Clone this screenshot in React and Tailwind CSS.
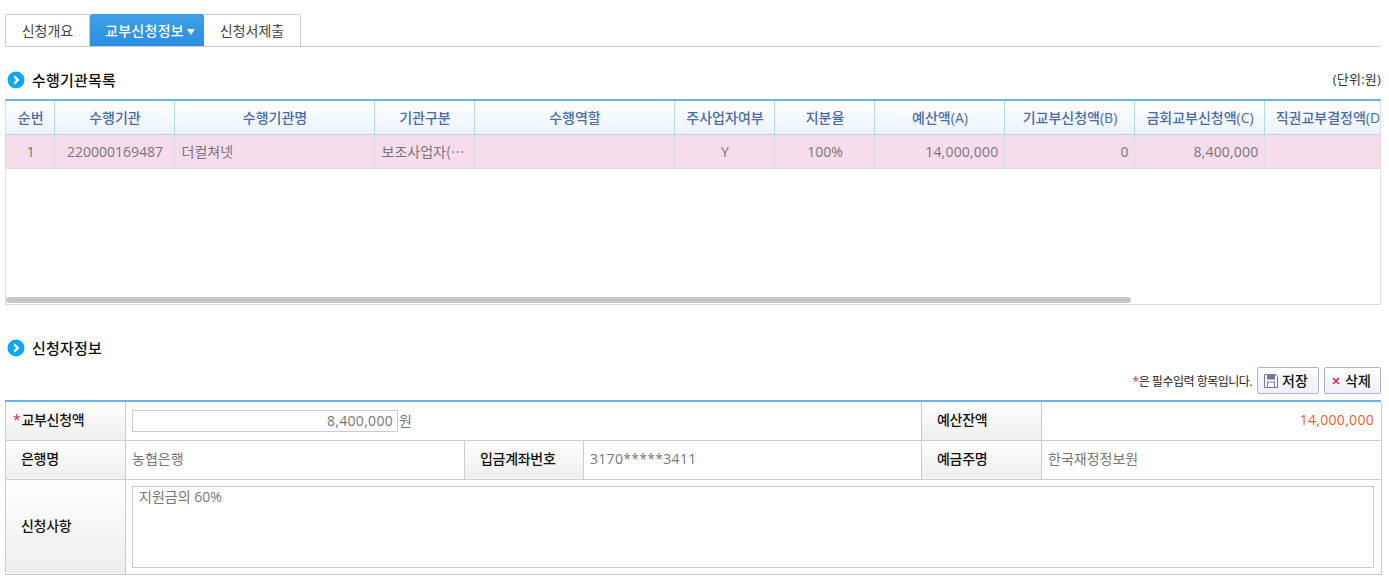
import React from 'react';

const columns = [
  { label: '순번', width: 'w-[48px]' },
  { label: '수행기관', width: 'w-[120px]' },
  { label: '수행기관명', width: 'w-[200px]' },
  { label: '기관구분', width: 'w-[100px]' },
  { label: '수행역할', width: 'w-[200px]' },
  { label: '주사업자여부', width: 'w-[100px]' },
  { label: '지분율', width: 'w-[100px]' },
  { label: '예산액(A)', width: 'w-[130px]' },
  { label: '기교부신청액(B)', width: 'w-[130px]' },
  { label: '금회교부신청액(C)', width: 'w-[130px]' },
  { label: '직권교부결정액(D)', width: 'w-[130px]' },
];

const row = [
  { text: '1', align: 'text-center' },
  { text: '220000169487', align: 'text-center' },
  { text: '더컬쳐넷', align: 'text-left' },
  { text: '보조사업자(주관)', align: "text-left font-['Noto_Sans_CJK_KR',sans-serif]" },
  { text: '', align: 'text-left' },
  { text: 'Y', align: 'text-center' },
  { text: '100%', align: 'text-center' },
  { text: '14,000,000', align: 'text-right tracking-[0.2px]' },
  { text: '0', align: 'text-right' },
  { text: '8,400,000', align: 'text-right tracking-[0.2px]' },
  { text: '', align: 'text-right' },
];

function SectionTitle({ children }) {
  return (
    <div className="flex items-center gap-[7px] text-[15px] font-medium text-[#111] tracking-[0.2px]">
      <svg width="18" height="18" viewBox="0 0 18 18">
        <circle cx="9" cy="9" r="8.5" fill="#0ea8f0" />
        <path d="M7.2 5.4 10.8 9l-3.6 3.6" fill="none" stroke="#fff" strokeWidth="2.2" />
      </svg>
      {children}
    </div>
  );
}

function Th({ children, className = '', ...rest }) {
  return (
    <th
      {...rest}
      className={`border border-[#ccc] bg-gradient-to-b from-white to-[#eee] font-medium text-[#111] text-left px-[15px] pb-[2px] tracking-[-0.3px] ${className}`}
    >
      {children}
    </th>
  );
}

function Td({ children, className = '', ...rest }) {
  return (
    <td {...rest} className={`border border-[#ccc] px-[6px] pb-[2px] text-[#777] ${className}`}>
      {children}
    </td>
  );
}

export default function App() {
  return (
    <div className="w-[1389px] h-[583px] overflow-hidden bg-white pl-[5px] pr-2 pt-[14px] text-[14px]">
      <div className="font-['Open_Sans','Noto_Sans_CJK_KR',sans-serif]">
        {/* tabs */}
        <div className="flex h-[33px] border-b border-[#ccc] text-[#444]">
          <div className="w-[85px] h-[32px] flex items-center justify-center border border-b-0 border-[#ccc] rounded-t-[2px]">
            신청개요
          </div>
          <div className="w-[114px] h-[32px] pl-[6px] flex items-center justify-center gap-[3px] bg-gradient-to-b from-[#3f9fe6] to-[#2b8fe0] text-white font-medium tracking-[0.3px] rounded-t-[2px]">
            교부신청정보
            <svg width="8" height="6" viewBox="0 0 8 6" className="mt-[3px]">
              <path d="M0 0h8L4 6z" fill="#fff" />
            </svg>
          </div>
          <div className="w-[97px] h-[32px] flex items-center justify-center border border-b-0 border-l-0 border-[#ccc] rounded-t-[2px]">
            신청서제출
          </div>
        </div>

        <div className="flex items-center justify-between h-[18px] mt-[24px] pl-[2px]">
          <SectionTitle>수행기관목록</SectionTitle>
          <span className="text-[13px] tracking-[0.2px] text-[#333]">(단위:원)</span>
        </div>

        {/* grid */}
        <div className="relative mt-[10px] h-[206px] border border-t-2 border-[#ddd] border-t-[#6fb1ee] overflow-hidden">
          <table className="table-fixed w-[1388px] border-collapse">
            <thead>
              <tr className="h-[33px]">
                {columns.map((c) => (
                  <th
                    key={c.label}
                    className={`${c.width} pl-[2px] border-r border-b border-[#b5d6f7] bg-gradient-to-b from-white to-[#eaf4fd] font-medium text-[#4a6aa8] whitespace-nowrap overflow-hidden`}
                  >
                    {c.label}
                  </th>
                ))}
              </tr>
            </thead>
            <tbody>
              <tr className="h-[34px] bg-[#f7dcec] text-[#777]">
                {row.map((cell, i) => (
                  <td
                    key={i}
                    className={`${cell.align} border-r border-b border-[#dcdce4] pl-[7px] pr-[5px] whitespace-nowrap overflow-hidden text-ellipsis`}
                  >
                    {cell.text}
                  </td>
                ))}
              </tr>
            </tbody>
          </table>
          <div className="absolute left-0 bottom-[1px] w-[1125px] h-[6px] rounded-full bg-[#c8c8c8]" />
        </div>

        <div className="h-[18px] mt-[32px] pl-[2px]">
          <SectionTitle>신청자정보</SectionTitle>
        </div>

        <div className="flex items-center justify-end gap-[5px] h-[27px] mt-[12px]">
          <span className="text-[12px] tracking-[-0.5px] text-[#222] mt-[3px]">
            <span className="text-[#e0245e]">*</span>은 필수입력 항목입니다.
          </span>
          <button className="flex items-center justify-center gap-[4px] w-[62px] h-[27px] pr-[4px] border border-[#a9b4d2] rounded-[2px] bg-gradient-to-b from-white to-[#edf0f6] text-[#111] font-medium">
            <svg width="14" height="14" viewBox="0 0 14 14">
              <path d="M.5.5h11l2 2v11H.5z" fill="#fff" stroke="#6f78a8" />
              <rect x="3" y="1" width="8" height="4.5" fill="#6f78a8" />
              <rect x="3.5" y="8" width="7" height="5.5" fill="#fff" stroke="#6f78a8" />
            </svg>
            저장
          </button>
          <button className="flex items-center justify-center gap-[5px] w-[57px] h-[27px] pr-[2px] border border-[#a9b4d2] rounded-[2px] bg-gradient-to-b from-white to-[#edf0f6] text-[#111] font-medium">
            <svg width="8" height="8" viewBox="0 0 8 8">
              <path d="M1 1l6 6M7 1 1 7" stroke="#e0245e" strokeWidth="1.6" />
            </svg>
            삭제
          </button>
        </div>

        {/* form */}
        <div className="mt-[6px] border-t-2 border-[#6fb1ee]">
          <table className="table-fixed w-[1376px] border-collapse">
            <colgroup>
              <col className="w-[120px]" />
              <col className="w-[339px]" />
              <col className="w-[119px]" />
              <col className="w-[338px]" />
              <col className="w-[120px]" />
              <col className="w-[340px]" />
            </colgroup>
            <tbody>
              <tr className="h-[38px]">
                <Th className="!border-t-0 !pl-[7px]">
                  <span className="text-[#e0245e] mr-[1px]">*</span>교부신청액
                </Th>
                <Td colSpan={3} className="!border-t-0 !pb-0">
                  <div className="flex items-center gap-[1px]">
                    <input
                      readOnly
                      value="8,400,000"
                      className="w-[266px] h-[22px] border border-[#ccc] text-right text-[#777] tracking-[0.3px] px-[4px] outline-none"
                    />
                    원
                  </div>
                </Td>
                <Th className="!border-t-0">예산잔액</Th>
                <Td className="!border-t-0 !pr-[7px] text-right !text-[#e8602c] tracking-[0.3px]">14,000,000</Td>
              </tr>
              <tr className="h-[39px]">
                <Th>은행명</Th>
                <Td>농협은행</Td>
                <Th>입금계좌번호</Th>
                <Td className="tracking-[0.3px]">3170*****3411</Td>
                <Th>예금주명</Th>
                <Td>한국재정정보원</Td>
              </tr>
              <tr className="h-[95px]">
                <Th>신청사항</Th>
                <Td colSpan={5} className="!pb-0 !pr-[7px]">
                  <textarea
                    readOnly
                    value="지원금의 60%"
                    className="block w-full h-[82px] border border-[#ccc] text-[#777] leading-[20px] px-[6px] py-0 outline-none resize-none"
                  />
                </Td>
              </tr>
            </tbody>
          </table>
        </div>
      </div>
    </div>
  );
}
